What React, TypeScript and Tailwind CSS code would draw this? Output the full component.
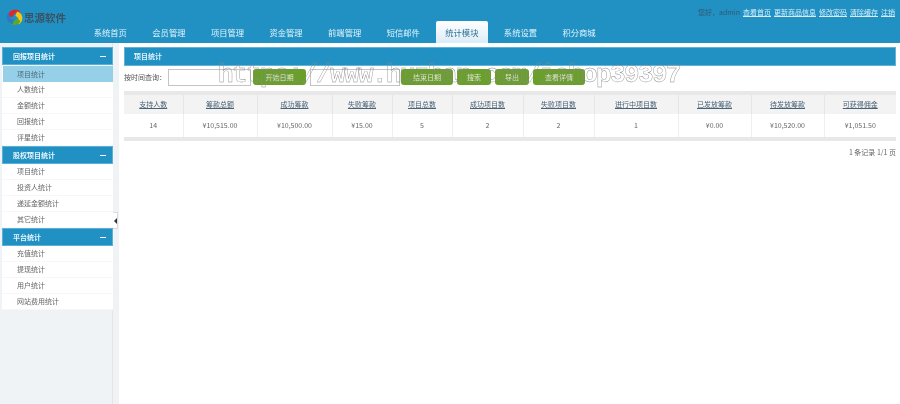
const menu = ["系统首页", "会员管理", "项目管理", "资金管理", "前端管理", "短信邮件", "统计模块", "系统设置", "积分商城"]

const links = ["查看首页", "更新商品信息", "修改密码", "清除缓存", "注销"]

const sections = [
  { title: "回报项目统计", items: ["项目统计", "人数统计", "金额统计", "回报统计", "评星统计"] },
  { title: "股权项目统计", items: ["项目统计", "投资人统计", "递延金额统计", "其它统计"] },
  { title: "平台统计", items: ["充值统计", "提现统计", "用户统计", "网站费用统计"] },
]

const columns = [
  { name: "支持人数", value: "14", width: "w-[59px]" },
  { name: "筹款总额", value: "¥10,515.00", width: "w-[74px]" },
  { name: "成功筹款", value: "¥10,500.00", width: "w-[75px]" },
  { name: "失败筹款", value: "¥15.00", width: "w-[60px]" },
  { name: "项目总数", value: "5", width: "w-[60px]" },
  { name: "成功项目数", value: "2", width: "w-[71px]" },
  { name: "失败项目数", value: "2", width: "w-[71px]" },
  { name: "进行中项目数", value: "1", width: "w-[84px]" },
  { name: "已发放筹款", value: "¥0.00", width: "w-[73px]" },
  { name: "待发放筹款", value: "¥10,520.00", width: "w-[73px]" },
  { name: "可获得佣金", value: "¥1,051.50", width: "w-[72px]" },
]

function Logo() {
  return (
    <svg width="17" height="17" viewBox="0 0 20 20" className="shrink-0">
      <path d="M2 9 C2 3 8 0 13 1 C16 2 17 4 17 5 C13 3 9 5 8 9 Z" fill="#e0252b" />
      <path d="M13 3 C18 4 20 9 19 13 C18 16 16 18 14 18 C16 14 15 10 11 8 Z" fill="#f3c613" />
      <path d="M17 14 C15 19 9 20 6 18 C4 17 3 15 3 14 C7 16 11 15 12 11 Z" fill="#5aa82c" />
      <path d="M8 18 C3 17 0 13 1 8 C1.500 6 3 4 4 4 C3 8 5 12 9 12 Z" fill="#2a78c8" />
    </svg>
  )
}

function GreenButton({ label, width }: { label: string; width: string }) {
  return (
    <button
      type="button"
      className={`h-[16px] ${width} rounded-[3px] bg-[#6b9f2c] text-[7px] leading-none text-[#dfe8d0]`}
    >
      {label}
    </button>
  )
}

export default function App() {
  return (
    <div className="relative flex min-h-[404px] flex-col bg-white font-['Noto_Sans_CJK_SC','Liberation_Sans',sans-serif] text-[7px] text-[#555]">
      <header className="flex h-[43px] flex-col bg-[#2191c4] blur-[0.35px]">
        <div className="flex h-[24px] justify-end gap-[3px] pr-[5px] pt-[8px] leading-[9px]">
          <span className="text-[#33566b]">您好，admin</span>
          {links.map((link) => (
            <a key={link} className="text-[#d5edf8] underline">
              {link}
            </a>
          ))}
        </div>
        <div className="relative flex flex-1 items-end pl-[81px]">
          <div className="absolute left-[6px] top-[-12px] flex items-center gap-[1px]">
            <Logo />
            <span className="font-['Noto_Sans_CJK_SC',serif] text-[10.500px] font-bold text-[#3a5261]">
              思源软件
            </span>
          </div>
          {menu.map((item) => (
            <div
              key={item}
              className={
                item === "统计模块"
                  ? "flex h-[22px] w-[52px] mx-[3.300px] items-center justify-center rounded-t-[2px] bg-gradient-to-b from-white to-[#dcecf6] text-[8.300px] text-[#2f7197]"
                  : "flex h-[22px] w-[58.600px] items-center justify-center text-[8.300px] text-[#e3f3fb]"
              }
            >
              {item}
            </div>
          ))}
        </div>
      </header>

      <div className="flex flex-1 blur-[0.35px]">
        <aside className="flex w-[119px] shrink-0 bg-[#f0f3f6]">
          <div className="w-[113px] border-r border-[#e3e7ea] pl-[2px] pt-[4px]">
            {sections.map((section) => (
              <div key={section.title} className="w-[111px]">
                <div className="flex h-[18px] items-center justify-between border border-[#5cb0d8] bg-[#2191c4] pl-[10px] pr-[6px] font-bold text-[#e8f5fb]">
                  <span>{section.title}</span>
                  <span className="h-[1px] w-[6px] bg-white" />
                </div>
                <ul className="bg-white">
                  {section.items.map((item, index) => (
                    <li
                      key={item}
                      className={
                        section.title === "回报项目统计" && index === 0
                          ? "ml-[1px] mt-[1px] flex h-[16px] items-center bg-[#96d0e8] pl-[14px] text-[#4d6a78]"
                          : "flex h-[16px] items-center border-b border-[#f5f7f8] pl-[15px] text-[#666]"
                      }
                    >
                      {item}
                    </li>
                  ))}
                </ul>
              </div>
            ))}
          </div>
          <div className="relative w-[6px]">
            <div className="absolute left-0 top-[169px] flex h-[17px] w-[5px] items-center justify-end border-y border-r border-[#d8dcdf] bg-white">
              <span className="h-0 w-0 border-y-[3px] border-r-[3px] border-y-transparent border-r-[#333]" />
            </div>
          </div>
        </aside>

        <main className="flex-1 pl-[5px] pr-[4px] pt-[4px]">
          <div className="flex h-[19px] items-center border border-[#63b3d9] bg-[#2191c4] pl-[9px] font-bold text-[#dff1f9]">
            项目统计
          </div>

          <div className="flex h-[22px] items-center">
            <span className="w-[44px] text-[#555]">按时间查询：</span>
            <input className="h-[17px] w-[83px] border border-[#c4c4c4] bg-white" />
            <span className="w-[2px]" />
            <GreenButton label="开始日期" width="w-[53px]" />
            <span className="w-[4px]" />
            <input className="h-[17px] w-[90px] border border-[#c4c4c4] bg-white" />
            <span className="w-[1px]" />
            <GreenButton label="结束日期" width="w-[52px]" />
            <span className="w-[4px]" />
            <GreenButton label="搜索" width="w-[34px]" />
            <span className="w-[4px]" />
            <GreenButton label="导出" width="w-[34px]" />
            <span className="w-[4px]" />
            <GreenButton label="查看详情" width="w-[52px]" />
          </div>

          <div className="mt-[3px] border-y-[4px] border-[#e8e8e8]">
            <table className="w-[772px] table-fixed border-collapse">
              <thead>
                <tr className="h-[19px] bg-[#f3f3f3]">
                  {columns.map((column) => (
                    <th
                      key={column.name}
                      className={`${column.width} border-r border-[#e6e6e6] p-0 text-center font-normal text-[#4a6275] underline last:border-r-0`}
                    >
                      {column.name}
                    </th>
                  ))}
                </tr>
              </thead>
              <tbody>
                <tr className="h-[23px]">
                  {columns.map((column) => (
                    <td
                      key={column.name}
                      className="border-r border-[#eeeeee] p-0 text-center text-[#666] last:border-r-0"
                    >
                      {column.value}
                    </td>
                  ))}
                </tr>
              </tbody>
            </table>
          </div>

          <div className="mt-[6px] text-right text-[#666]">1 条记录 1/1 页</div>
        </main>
      </div>

      <div className="pointer-events-none absolute left-[218px] top-[60px] whitespace-nowrap font-['Liberation_Mono',monospace] text-[26px] font-bold leading-[30px] tracking-[-1.600px] text-transparent [-webkit-text-stroke:0.4px_#8a8a8a]">
        https://www.huzhan.com/ishop39397
      </div>
    </div>
  )
}
